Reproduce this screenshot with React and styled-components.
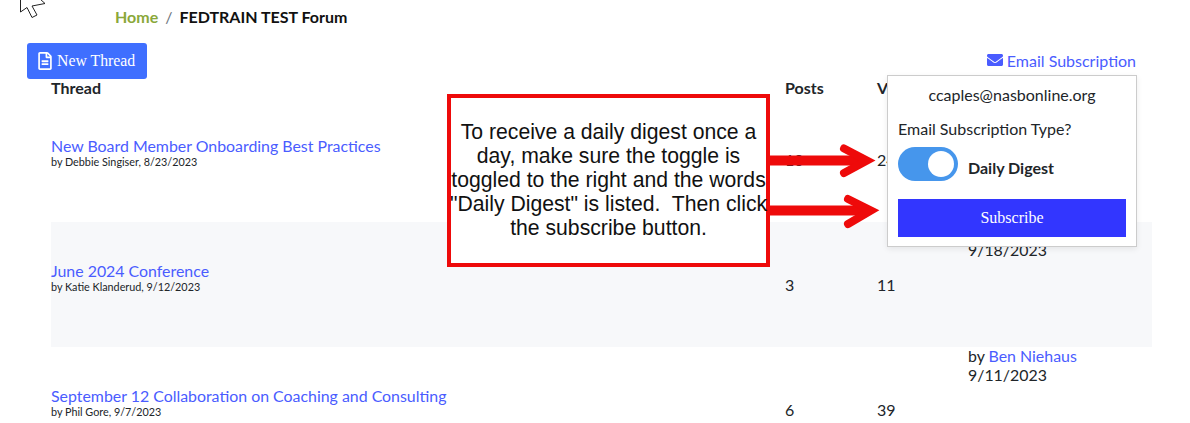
import React from "react";
import styled, { createGlobalStyle } from "styled-components";
import { FaRegFileAlt, FaEnvelope } from "react-icons/fa";

const Global = createGlobalStyle`
  html, body { margin: 0; padding: 0; background: #fff; }
  body { font-family: Lato, "Open Sans", sans-serif; color: #212529; overflow: hidden; }
`;

const Page = styled.div`
  position: relative;
  width: 1190px;
  height: 423px;
  overflow: hidden;
`;

const Cursor = styled.svg`
  position: absolute;
  left: 0;
  top: 0;
`;

const Breadcrumb = styled.nav`
  display: flex;
  gap: 7px;
  height: 43px;
  padding: 8px 0 0 115px;
  box-sizing: border-box;
  font-size: 16px;
  line-height: 18px;
  font-weight: 700;
`;

const Crumb = styled.a`
  color: #8aa83a;
`;

const Slash = styled.span`
  color: #6c757d;
  font-weight: 400;
`;

const Current = styled.span`
  color: #111;
`;

const Toolbar = styled.div`
  display: flex;
  align-items: center;
  justify-content: space-between;
  height: 36px;
  padding: 0 54px 0 27px;
`;

const NewThread = styled.button`
  display: flex;
  align-items: center;
  gap: 3px;
  width: 120px;
  height: 36px;
  padding: 0 0 0 9px;
  border: 0;
  border-radius: 3px;
  background: #3f6fff;
  color: #fff;
  font-family: "Liberation Serif", serif;
  font-size: 15.8px;
`;

const EmailLink = styled.a`
  display: flex;
  align-items: center;
  gap: 4px;
  padding-bottom: 2px;
  color: #4a5cff;
  font-size: 16px;
`;

const Table = styled.div`
  margin-left: 51px;
  width: 1101px;
`;

const Row = styled.div`
  display: grid;
  grid-template-columns: 734px 92px 91px 184px;
  height: ${(p) => (p.$head ? "18px" : "125px")};
  background: ${(p) => (p.$striped ? "#f7f8fa" : "transparent")};
  font-weight: ${(p) => (p.$head ? 700 : 400)};
  font-size: 16px;
  line-height: 18px;
`;

const ThreadCell = styled.div`
  align-self: center;
  padding-bottom: 15px;
`;

const ThreadLink = styled.a`
  display: block;
  color: #4a5cff;
  font-size: 15.9px;
  line-height: 19px;
`;

const ByLine = styled.div`
  margin-top: 1px;
  font-size: 10.8px;
  line-height: 12px;
  color: #212529;
`;

const Count = styled.div`
  align-self: center;
  padding-top: 1px;
`;

const LastPost = styled.div`
  font-size: 15.9px;
  line-height: 19px;
  transform: translateY(${(p) => p.$shift}px);
`;

const Author = styled.a`
  color: #4a5cff;
`;

const Callout = styled.div`
  position: absolute;
  left: 447px;
  top: 94px;
  width: 323px;
  height: 173px;
  box-sizing: border-box;
  border: 4px solid #ee0a0a;
  padding-bottom: 2px;
  background: #fff;
  display: flex;
  align-items: center;
  justify-content: center;
  text-align: center;
  font-family: "Liberation Sans", Arial, sans-serif;
  font-size: 21.2px;
  line-height: 24px;
  color: #111;
  white-space: nowrap;
`;

const Arrows = styled.svg`
  position: absolute;
  left: 765px;
  top: 135px;
`;

const Popup = styled.div`
  position: absolute;
  left: 887px;
  top: 75px;
  width: 250px;
  height: 172px;
  box-sizing: border-box;
  padding: 0 10px;
  border: 1px solid #ccc;
  background: #fff;
  box-shadow: 0 2px 6px rgba(0, 0, 0, 0.08);
  display: flex;
  flex-direction: column;
`;

const PopupEmail = styled.div`
  margin-top: 10px;
  font-size: 16px;
  line-height: 18px;
  text-align: center;
`;

const TypeLabel = styled.div`
  margin-top: 16px;
  font-size: 16px;
  line-height: 18px;
`;

const ToggleRow = styled.div`
  display: flex;
  align-items: center;
  gap: 10px;
  margin-top: 9px;
  font-size: 16px;
  font-weight: 700;
`;

const ToggleLabel = styled.span`
  padding-top: 6px;
`;

const Toggle = styled.div`
  position: relative;
  width: 60px;
  height: 34px;
  border-radius: 17px;
  background: #4696ec;
`;

const Knob = styled.div`
  position: absolute;
  top: 4px;
  right: 4px;
  width: 26px;
  height: 26px;
  border-radius: 50%;
  background: #fff;
`;

const Subscribe = styled.button`
  margin-top: 18px;
  height: 38px;
  border: 0;
  background: #3236ff;
  color: #fff;
  font-family: "Liberation Serif", serif;
  font-size: 16px;
`;

const rows = [
  { title: "New Board Member Onboarding Best Practices", by: "by Debbie Singiser, 8/23/2023", posts: "10", views: "24", last: <>by<br />9/20/2023</>, shift: 8 },
  { title: "June 2024 Conference", by: "by Katie Klanderud, 9/12/2023", posts: "3", views: "11", last: <>by<br />9/18/2023</>, shift: -1, striped: true },
  { title: "September 12 Collaboration on Coaching and Consulting", by: "by Phil Gore, 9/7/2023", posts: "6", views: "39", last: <>by <Author>Ben Niehaus</Author><br />9/11/2023</>, shift: -1 },
];

export default function App() {
  return (
    <Page>
      <Global />
      <Breadcrumb>
        <Crumb>Home</Crumb>
        <Slash>/</Slash>
        <Current>FEDTRAIN TEST Forum</Current>
      </Breadcrumb>
      <Toolbar>
        <NewThread><FaRegFileAlt size={18} />New Thread</NewThread>
        <EmailLink><FaEnvelope size={16} />Email Subscription</EmailLink>
      </Toolbar>
      <Table>
        <Row $head>
          <div>Thread</div>
          <div>Posts</div>
          <div>Views</div>
          <div>Last Post</div>
        </Row>
        {rows.map((r) => (
          <Row key={r.title} $striped={r.striped}>
            <ThreadCell>
              <ThreadLink>{r.title}</ThreadLink>
              <ByLine>{r.by}</ByLine>
            </ThreadCell>
            <Count>{r.posts}</Count>
            <Count>{r.views}</Count>
            <LastPost $shift={r.shift}>{r.last}</LastPost>
          </Row>
        ))}
      </Table>
      <Cursor width="50" height="20" viewBox="0 0 50 20">
        <path d="M20.5 -1V12L27 7.5L32 17.5L37 15L32 6L45 3.5L40 -1" fill="#fff" stroke="#222" strokeWidth="1" />
      </Cursor>
      <Arrows width="125" height="100" viewBox="0 0 125 100">
        <path d="M5 25.5H100" fill="none" stroke="#ee0a0a" strokeWidth="10" />
        <path d="M79 13.5L102 25.5L79 38" fill="none" stroke="#ee0a0a" strokeWidth="8" strokeLinecap="round" />
        <path d="M5 75.5H104" fill="none" stroke="#ee0a0a" strokeWidth="10" />
        <path d="M83 64L106 75.5L83 89" fill="none" stroke="#ee0a0a" strokeWidth="8" strokeLinecap="round" />
      </Arrows>
      <Callout>
        <div>
          To receive a daily digest once a<br />
          day, make sure the toggle is<br />
          toggled to the right and the words<br />
          "Daily Digest" is listed.&nbsp; Then click<br />
          the subscribe button.
        </div>
      </Callout>
      <Popup>
        <PopupEmail>ccaples@nasbonline.org</PopupEmail>
        <TypeLabel>Email Subscription Type?</TypeLabel>
        <ToggleRow><Toggle><Knob /></Toggle><ToggleLabel>Daily Digest</ToggleLabel></ToggleRow>
        <Subscribe>Subscribe</Subscribe>
      </Popup>
    </Page>
  );
}
